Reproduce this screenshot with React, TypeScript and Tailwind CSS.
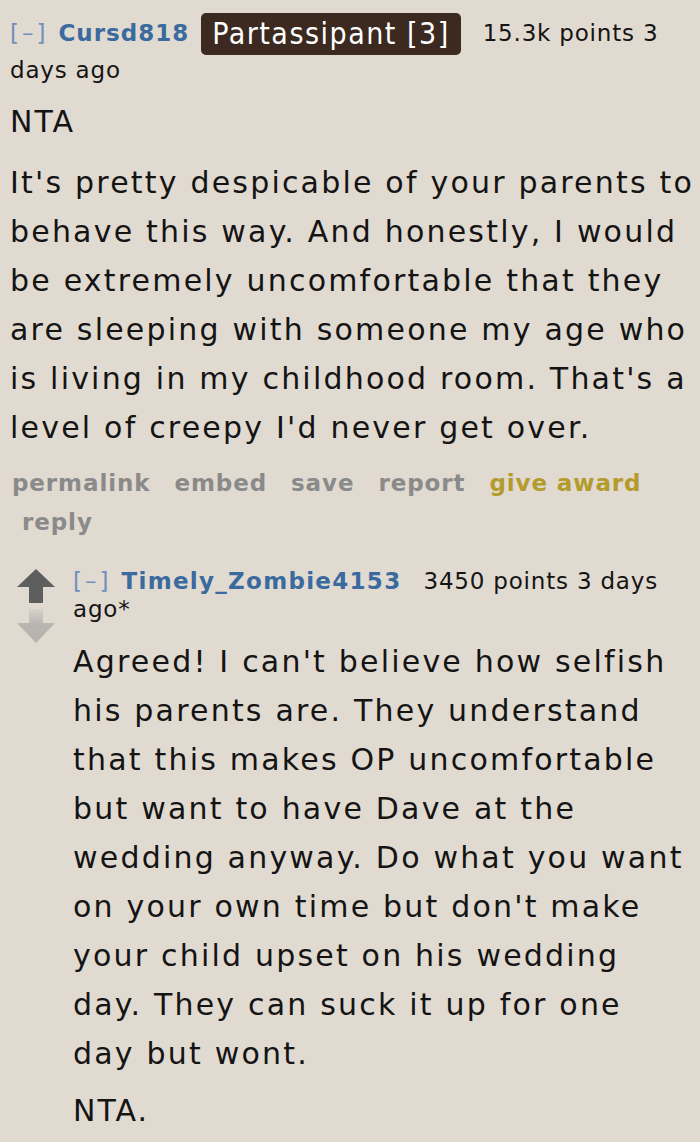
import React from 'react';

const PARENT_LINES = [
  "It's pretty despicable of your parents to",
  'behave this way. And honestly, I would',
  'be extremely uncomfortable that they',
  'are sleeping with someone my age who',
  "is living in my childhood room. That's a",
  "level of creepy I'd never get over.",
];

const CHILD_LINES = [
  "Agreed! I can't believe how selfish",
  'his parents are. They understand',
  'that this makes OP uncomfortable',
  'but want to have Dave at the',
  'wedding anyway. Do what you want',
  "on your own time but don't make",
  'your child upset on his wedding',
  'day. They can suck it up for one',
  'day but wont.',
];

const font = { fontFamily: '"DejaVu Sans", Verdana, sans-serif' };
const condensed = { fontFamily: '"DejaVu Sans Condensed", "DejaVu Sans", sans-serif', fontStretch: 'condensed' as const };

function Body({ lines }: { lines: string[] }) {
  return (
    <div className="text-[30px] leading-[49px] tracking-[2.2px] whitespace-nowrap">
      {lines.map((l, i) => (
        <div key={i}>{l}</div>
      ))}
    </div>
  );
}

export default function App() {
  return (
    <div className="w-[700px] h-[1142px] overflow-hidden bg-[#e1dad0] text-[#141414]" style={font}>
      <div className="pl-[10px] pt-[13px]">
        {/* header */}
        <div className="text-[23px] leading-[30px] tracking-[0.8px] w-[670px]">
          <span className="text-[#6f8fbd] tracking-[3px]">[–]</span>
          <span className="font-bold text-[#3a6a9e] tracking-[1px] ml-[10px]">Cursd818</span>
          <span
            className="inline-block align-middle bg-[#3c2a21] text-white text-[30px] leading-[42px] tracking-[1.5px] px-[11px] rounded-[5px] ml-[12px] mr-[22px]"
            style={condensed}
          >
            Partassipant [3]
          </span>
          <span>15.3k points 3 days ago</span>
        </div>

        <div className="text-[30px] leading-[49px] tracking-[2px] mt-[12px]">NTA</div>
        <div className="mt-[12px]">
          <Body lines={PARENT_LINES} />
        </div>

        {/* actions */}
        <div className="mt-[12px] text-[23px] leading-[39px] font-bold text-[#8a8a8a] tracking-[0.9px]">
          <div className="flex gap-[24px] pl-[2px]">
            <span>permalink</span>
            <span>embed</span>
            <span>save</span>
            <span>report</span>
            <span className="text-[#b39b2c]">give award</span>
          </div>
          <div className="pl-[12px]">reply</div>
        </div>

        {/* child comment */}
        <div className="flex mt-[25px]">
          <div className="w-[63px] shrink-0 flex flex-col pl-[7px] pt-[2px]">
            <svg width="38" height="34" viewBox="0 0 38 34">
              <polygon points="19,0 38,18 26,18 26,34 12,34 12,18 0,18" fill="#5e5e5e" />
            </svg>
            <svg width="38" height="34" viewBox="0 0 38 34" className="mt-[6px]">
              <defs>
                <linearGradient id="dn" x1="0" y1="0" x2="0" y2="1">
                  <stop offset="0" stopColor="#d6d2cc" />
                  <stop offset="0.45" stopColor="#b9b6b1" />
                  <stop offset="1" stopColor="#b5b2ad" />
                </linearGradient>
              </defs>
              <polygon points="12,0 26,0 26,14 38,14 19,34 0,14 12,14" fill="url(#dn)" />
            </svg>
          </div>
          <div className="flex-1">
            <div className="text-[23px] leading-[28px] tracking-[0.8px] w-[600px]">
              <span className="text-[#6f8fbd] tracking-[3px]">[–]</span>
              <span className="font-bold text-[#3a6a9e] tracking-[1.3px] ml-[10px]">Timely_Zombie4153</span>
              <span className="ml-[22px]">3450 points 3 days ago*</span>
            </div>
            <div className="mt-[14px]">
              <Body lines={CHILD_LINES} />
            </div>
            <div className="text-[30px] leading-[49px] tracking-[2px] mt-[8px]">NTA.</div>
          </div>
        </div>
      </div>
    </div>
  );
}
